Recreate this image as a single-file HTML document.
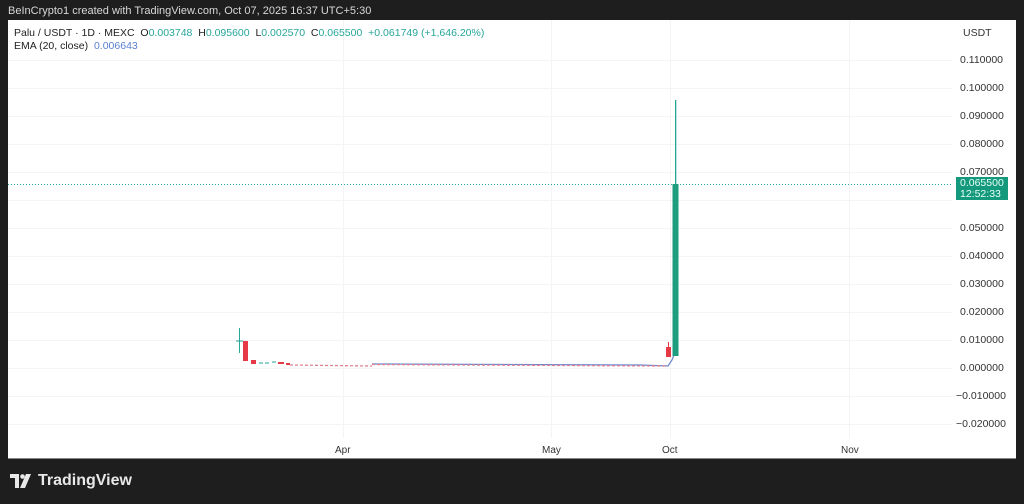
<!DOCTYPE html>
<html><head><style>
html,body{margin:0;padding:0;width:1024px;height:504px;background:#1e1e1e;overflow:hidden;font-family:"Liberation Sans",sans-serif}
.top{position:absolute;left:8px;top:5px;color:#d8d8d8;font-size:11px}
.panel{position:absolute;left:8px;top:20px;width:1008px;height:439px;background:#fff}
.leg{position:absolute;left:14px;top:27px;font-size:10.5px;color:#222;line-height:13px}
.g{color:#26a69a}.b{color:#5b7fd0}
.ax{position:absolute;left:960px;font-size:10.5px;color:#333}
.tl{position:absolute;top:445px;font-size:10px;color:#333}
.logo{position:absolute;left:10px;top:472px;color:#e8e8e8;font-size:17px;font-weight:bold;display:flex;align-items:center;gap:6px}
</style></head><body>
<div class="top">BeInCrypto1 created with TradingView.com, Oct 07, 2025 16:37 UTC+5:30</div>
<div class="panel"></div>
<svg style="position:absolute;left:0;top:0" width="1024" height="504">
<g stroke="#f4f4f6" stroke-width="1">
<line x1="8" x2="952" y1="60.5" y2="60.5"/><line x1="8" x2="952" y1="88.5" y2="88.5"/><line x1="8" x2="952" y1="116.5" y2="116.5"/><line x1="8" x2="952" y1="144.5" y2="144.5"/><line x1="8" x2="952" y1="172.5" y2="172.5"/><line x1="8" x2="952" y1="200.5" y2="200.5"/><line x1="8" x2="952" y1="228.5" y2="228.5"/><line x1="8" x2="952" y1="256.5" y2="256.5"/><line x1="8" x2="952" y1="284.5" y2="284.5"/><line x1="8" x2="952" y1="312.5" y2="312.5"/><line x1="8" x2="952" y1="340.5" y2="340.5"/><line x1="8" x2="952" y1="368.5" y2="368.5"/><line x1="8" x2="952" y1="396.5" y2="396.5"/><line x1="8" x2="952" y1="424.5" y2="424.5"/>
<line x1="343.5" x2="343.5" y1="20" y2="438"/><line x1="551.5" x2="551.5" y1="20" y2="438"/><line x1="670.5" x2="670.5" y1="20" y2="438"/><line x1="849.5" x2="849.5" y1="20" y2="438"/>
</g>
<line x1="8" x2="952" y1="184.5" y2="184.5" stroke="#26a69a" stroke-dasharray="1 2" stroke-width="1"/>
<path d="M372 364 L640 365 L668 366 L672 360 L676 350" stroke="#6a86cc" fill="none" stroke-width="1.2"/>
<path d="M290 365 L372 366 M372 364.5 L665 366" stroke="#e08090" stroke-dasharray="3 2" stroke-width="1.3" fill="none"/>
<line x1="239.5" x2="239.5" y1="328" y2="353" stroke="#26a69a"/><line x1="236" x2="243" y1="341" y2="341" stroke="#26a69a"/>
<rect x="243" y="341" width="5" height="20" fill="#e53945"/>
<rect x="251" y="360" width="5" height="4" fill="#e53945"/>
<g stroke="#26a69a"><line x1="259" x2="263" y1="363" y2="363"/><line x1="265" x2="269" y1="363" y2="363"/><line x1="272" x2="276" y1="362" y2="362"/></g>
<rect x="278" y="362" width="6" height="2" fill="#e53945"/><rect x="286" y="363" width="4" height="2" fill="#e53945"/>
<line x1="668.5" x2="668.5" y1="342" y2="347" stroke="#e53945"/>
<rect x="666" y="347" width="5" height="10" fill="#e53945"/>
<rect x="675" y="100" width="1.3" height="84" fill="#26a69a"/>
<rect x="672.5" y="184" width="6" height="172" fill="#1e9e7e"/>
<line x1="8" x2="1016" y1="458.5" y2="458.5" stroke="#888"/>
</svg>
<div class="leg">Palu / USDT · 1D · MEXC&nbsp; O<span class="g">0.003748</span>&nbsp; H<span class="g">0.095600</span>&nbsp; L<span class="g">0.002570</span>&nbsp; C<span class="g">0.065500</span>&nbsp; <span class="g">+0.061749 (+1,646.20%)</span><br>EMA (20, close)&nbsp; <span class="b">0.006643</span></div>
<div class="ax" style="top:27px;left:963px">USDT</div>
<div class="ax" style="top:54px">0.110000</div>
<div class="ax" style="top:82px">0.100000</div>
<div class="ax" style="top:110px">0.090000</div>
<div class="ax" style="top:138px">0.080000</div>
<div class="ax" style="top:166px">0.070000</div>
<div class="ax" style="top:222px">0.050000</div>
<div class="ax" style="top:250px">0.040000</div>
<div class="ax" style="top:278px">0.030000</div>
<div class="ax" style="top:306px">0.020000</div>
<div class="ax" style="top:334px">0.010000</div>
<div class="ax" style="top:362px">0.000000</div>
<div class="ax" style="top:390px;left:956px">−0.010000</div>
<div class="ax" style="top:418px;left:956px">−0.020000</div>
<div style="position:absolute;left:956px;top:177px;width:52px;height:23px;background:#14997c;color:#e8fff8;font-size:10.5px;line-height:11px;padding-left:4px;box-sizing:border-box;padding-top:1px">0.065500<br>12:52:33</div>
<div class="tl" style="left:335px">Apr</div>
<div class="tl" style="left:542px">May</div>
<div class="tl" style="left:662px">Oct</div>
<div class="tl" style="left:841px">Nov</div>
<div class="logo"><svg width="22" height="14" viewBox="0 0 22 14"><path d="M0 0H9V14H5V4H0Z" fill="#e8e8e8"/><circle cx="12.5" cy="2.5" r="2.3" fill="#e8e8e8"/><path d="M16 0H21L15 14H10Z" fill="#e8e8e8"/></svg><span style="font-size:16px">TradingView</span></div>
</body></html>
